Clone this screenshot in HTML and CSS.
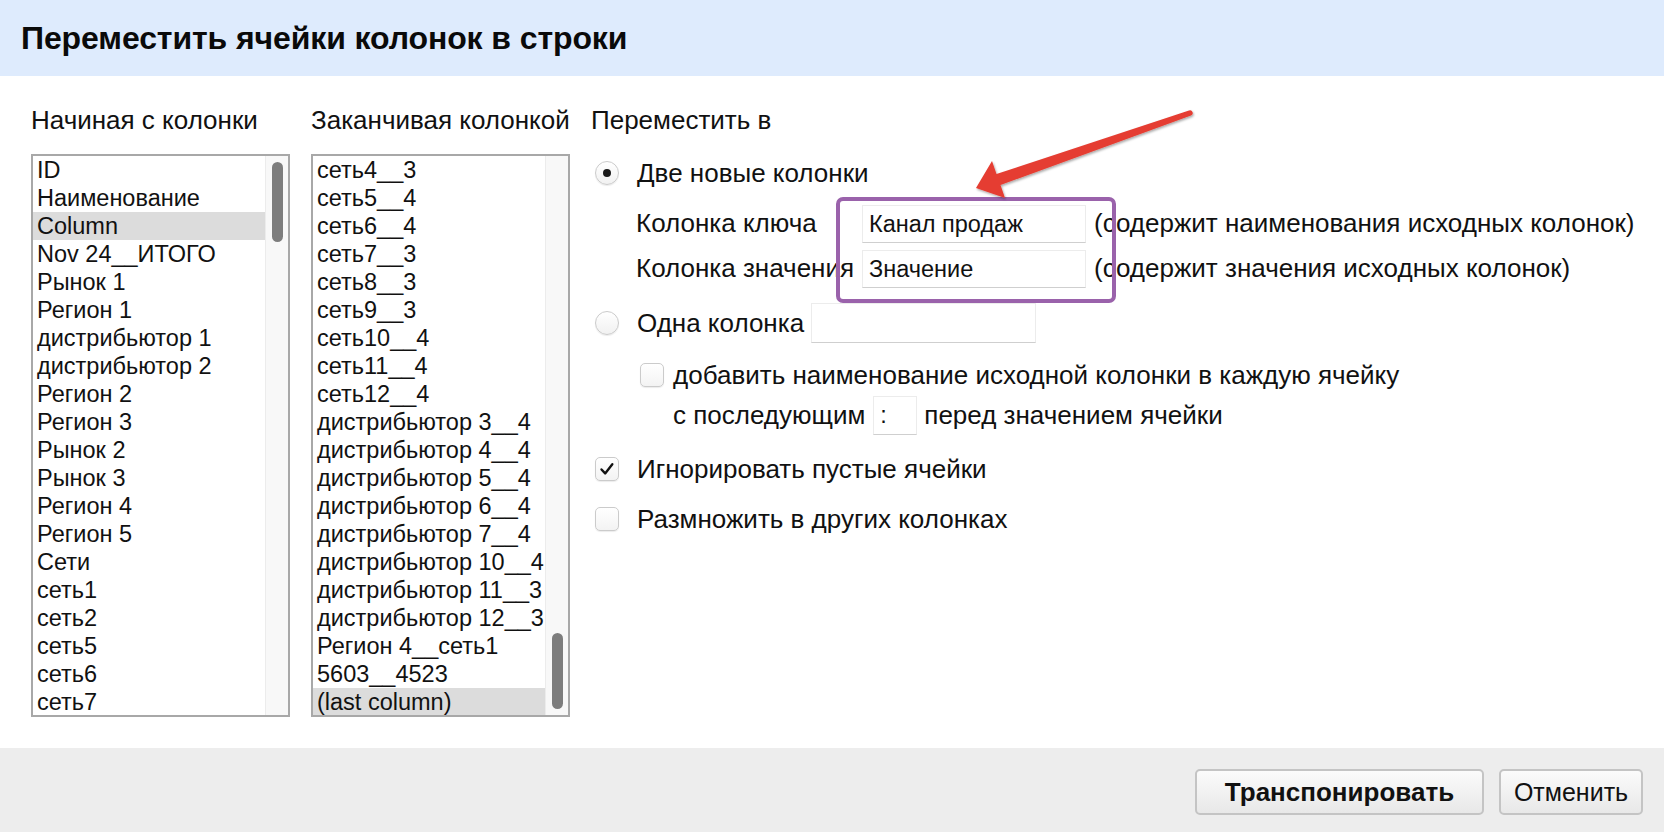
FILE: index.html
```html
<!DOCTYPE html>
<html lang="ru">
<head>
<meta charset="utf-8">
<title>Переместить ячейки колонок в строки</title>
<link rel="stylesheet" href="styles.css">
</head>
<body>
<div class="dialog">
  <header class="header">
    <h1 class="title">Переместить ячейки колонок в строки</h1>
  </header>
  <main class="content">
    <section class="col col-list">
      <div class="col-label">Начиная с колонки</div>
      <div class="listbox">
        <ul class="items">
          <li>ID</li>
          <li>Наименование</li>
          <li class="sel">Column</li>
          <li>Nov 24__ИТОГО</li>
          <li>Рынок 1</li>
          <li>Регион 1</li>
          <li>дистрибьютор 1</li>
          <li>дистрибьютор 2</li>
          <li>Регион 2</li>
          <li>Регион 3</li>
          <li>Рынок 2</li>
          <li>Рынок 3</li>
          <li>Регион 4</li>
          <li>Регион 5</li>
          <li>Сети</li>
          <li>сеть1</li>
          <li>сеть2</li>
          <li>сеть5</li>
          <li>сеть6</li>
          <li>сеть7</li>
        </ul>
        <div class="track"><div class="thumb thumb-top"></div></div>
      </div>
    </section>
    <section class="col col-list">
      <div class="col-label">Заканчивая колонкой</div>
      <div class="listbox">
        <ul class="items">
          <li>сеть4__3</li>
          <li>сеть5__4</li>
          <li>сеть6__4</li>
          <li>сеть7__3</li>
          <li>сеть8__3</li>
          <li>сеть9__3</li>
          <li>сеть10__4</li>
          <li>сеть11__4</li>
          <li>сеть12__4</li>
          <li>дистрибьютор 3__4</li>
          <li>дистрибьютор 4__4</li>
          <li>дистрибьютор 5__4</li>
          <li>дистрибьютор 6__4</li>
          <li>дистрибьютор 7__4</li>
          <li>дистрибьютор 10__4</li>
          <li>дистрибьютор 11__3</li>
          <li>дистрибьютор 12__3</li>
          <li>Регион 4__сеть1</li>
          <li>5603__4523</li>
          <li class="sel">(last column)</li>
        </ul>
        <div class="track"><div class="thumb thumb-bottom"></div></div>
      </div>
    </section>
    <section class="col col-options">
      <div class="col-label">Переместить в</div>
      <div class="opt opt-radio1">
        <span class="radio checked"></span>
        <span class="opt-text">Две новые колонки</span>
      </div>
      <div class="pair-grid">
        <div class="pair-label">Колонка ключа</div>
        <div class="field field-wide">Канал продаж</div>
        <div class="pair-note">(содержит наименования исходных колонок)</div>
        <div class="pair-label">Колонка значения</div>
        <div class="field field-wide">Значение</div>
        <div class="pair-note">(содержит значения исходных колонок)</div>
      </div>
      <div class="opt opt-radio2">
        <span class="radio"></span>
        <span class="opt-text">Одна колонка</span>
        <span class="field field-one"></span>
      </div>
      <div class="sub">
        <div class="opt opt-sub1">
          <span class="check"></span>
          <span class="opt-text">добавить наименование исходной колонки в каждую ячейку</span>
        </div>
        <div class="opt opt-sub2">
          <span class="opt-text">с последующим</span>
          <span class="field field-sep">:</span>
          <span class="opt-text">перед значением ячейки</span>
        </div>
      </div>
      <div class="opt opt-check1">
        <span class="check checked">
          <svg viewBox="0 0 24 24" width="22" height="22"><path d="M6 12.5 L10 16.8 L17.8 6.8" fill="none" stroke="#111" stroke-width="2.6" stroke-linecap="round" stroke-linejoin="round"/></svg>
        </span>
        <span class="opt-text">Игнорировать пустые ячейки</span>
      </div>
      <div class="opt opt-check2">
        <span class="check"></span>
        <span class="opt-text">Размножить в других колонках</span>
      </div>
      <div class="highlight"></div>
      <svg class="arrow" viewBox="0 0 240 110" width="240" height="110">
        <defs>
          <filter id="sh" x="-10%" y="-20%" width="120%" height="150%">
            <feDropShadow dx="1" dy="1.5" stdDeviation="0.8" flood-color="#000" flood-opacity="0.35"/>
          </filter>
        </defs>
        <path filter="url(#sh)" d="M16 88 L32 61 L36.5 74 L229 10.5 A2.6 2.6 0 0 1 231 15.5 L40.5 85 L45 98 Z" fill="#e53d32"/>
      </svg>
    </section>
  </main>
  <footer class="footer">
    <button class="btn btn-primary">Транспонировать</button>
    <button class="btn btn-cancel">Отменить</button>
  </footer>
</div>
</body>
</html>
```

FILE: styles.css
```css
* { box-sizing: border-box; }
html, body { margin: 0; padding: 0; }
body {
  width: 1664px;
  height: 832px;
  overflow: hidden;
  background: #ffffff;
  font-family: "Liberation Sans", Arial, Helvetica, sans-serif;
  color: #111;
}
.dialog {
  display: flex;
  flex-direction: column;
  height: 832px;
}
.header {
  height: 76px;
  background: #deebfd;
  display: flex;
  align-items: center;
  padding-left: 21px;
  flex-shrink: 0;
}
.title {
  margin: 0;
  font-size: 32px;
  font-weight: bold;
  color: #0a0a0a;
  letter-spacing: -0.1px;
}
.content {
  flex: 1;
  display: flex;
  padding: 29px 0 0 31px;
  gap: 21px;
}
.col-label {
  font-size: 26px;
  line-height: 30px;
  height: 49px;
  color: #111;
  white-space: nowrap;
}
.col-list { width: 259px; flex-shrink: 0; }
.listbox {
  width: 259px;
  height: 563px;
  border: 2px solid #a8a8a8;
  display: flex;
  overflow: hidden;
  background: #fff;
}
.items {
  list-style: none;
  margin: 0;
  padding: 0;
  flex: 1;
  min-width: 0;
}
.items li {
  height: 28px;
  line-height: 28px;
  font-size: 23.5px;
  padding-left: 4px;
  white-space: nowrap;
  color: #111;
}
.items li.sel { background: #dcdcdc; }
.track {
  width: 23px;
  flex-shrink: 0;
  background: #f8f8f8;
  border-left: 1px solid #ececec;
  padding: 0 5px 0 6px;
}
.thumb {
  width: 11px;
  height: 80px;
  border-radius: 6px;
  background: #7d7d7d;
}
.thumb-top { margin-top: 6px; }
.thumb-bottom { margin-top: 477px; height: 76px; }

.col-options {
  position: relative;
  flex: 1;
}
.opt {
  display: flex;
  align-items: center;
  font-size: 26px;
  color: #111;
}
.opt-text { white-space: nowrap; }
.radio {
  width: 24px;
  height: 24px;
  border-radius: 50%;
  border: 1px solid #cbcbcb;
  background: linear-gradient(#ffffff, #f1f1f1);
  box-shadow: 0 1px 1px rgba(0,0,0,0.08);
  margin: 0 18px 0 4px;
  flex-shrink: 0;
  display: flex;
  align-items: center;
  justify-content: center;
}
.radio.checked::after {
  content: "";
  width: 8px;
  height: 8px;
  border-radius: 50%;
  background: #1a1a1a;
}
.check {
  width: 24px;
  height: 24px;
  border-radius: 5px;
  border: 1px solid #cbcbcb;
  background: linear-gradient(#ffffff, #f3f3f3);
  box-shadow: 0 1px 1px rgba(0,0,0,0.08);
  margin: 0 18px 0 4px;
  flex-shrink: 0;
  display: flex;
  align-items: center;
  justify-content: center;
}
.opt-radio1 { height: 24px; margin-top: 7px; }
.pair-grid {
  display: grid;
  grid-template-columns: 218px 224px auto;
  grid-auto-rows: 38px;
  column-gap: 8px;
  row-gap: 7px;
  margin-top: 20px;
  padding-left: 45px;
  align-items: center;
}
.pair-label, .pair-note {
  font-size: 26px;
  white-space: nowrap;
  margin-top: -2px;
}
.pair-label { position: relative; z-index: 0; }
.field {
  display: flex;
  align-items: center;
  background: #fff;
  border: 1px solid #ececec;
  border-bottom-color: #cfcfcf;
  font-size: 23.5px;
  color: #111;
}
.field-wide {
  width: 224px;
  height: 38px;
  padding-left: 6px;
  position: relative;
  z-index: 1;
}
.opt-radio2 { margin-top: 15px; height: 40px; }
.field-one {
  width: 225px;
  height: 40px;
  margin-left: 7px;
}
.sub { padding-left: 46px; }
.opt-sub1 { margin-top: 20px; height: 24px; }
.opt-sub1 .check { margin: 0 9px 0 3px; }
.opt-sub2 { margin-top: 9px; height: 39px; padding-left: 36px; }
.field-sep {
  width: 44px;
  height: 39px;
  margin: 0 7px 0 8px;
  padding-left: 6px;
}
.opt-check1 { margin-top: 22px; height: 24px; }
.opt-check2 { margin-top: 26px; height: 24px; }

.highlight {
  position: absolute;
  left: 245px;
  top: 92px;
  width: 280px;
  height: 106px;
  border: 4px solid #9a62ab;
  border-radius: 7px;
  pointer-events: none;
  z-index: 2;
}
.arrow {
  position: absolute;
  left: 369px;
  top: -5px;
  z-index: 3;
}

.footer {
  height: 84px;
  flex-shrink: 0;
  background: #ededed;
  display: flex;
  justify-content: flex-end;
  align-items: flex-start;
  gap: 15px;
  padding: 21px 21px 0 0;
}
.btn {
  font-family: "Liberation Sans", Arial, Helvetica, sans-serif;
  font-size: 25px;
  color: #111;
  height: 46px;
  padding: 0;
  border: 2px solid #c4c4c4;
  border-radius: 5px;
  background: linear-gradient(#fbfbfb, #e8e8e8);
}
.btn-primary {
  width: 289px;
  font-weight: bold;
  font-size: 26px;
}
.btn-cancel { width: 144px; }
```
